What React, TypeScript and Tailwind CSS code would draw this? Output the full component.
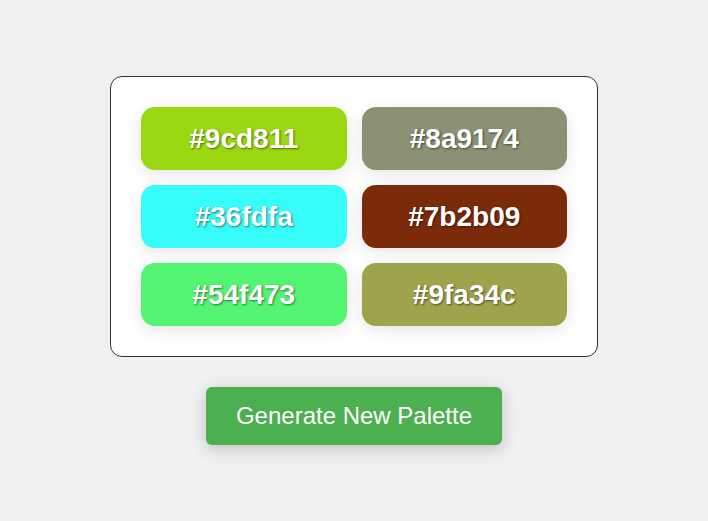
const colors = ["#9cd811", "#8a9174", "#36fdfa", "#7b2b09", "#54f473", "#9fa34c"];

const swatchBg: Record<string, string> = {
  "#9cd811": "bg-[#9cd811]",
  "#8a9174": "bg-[#8a9174]",
  "#36fdfa": "bg-[#36fdfa]",
  "#7b2b09": "bg-[#7b2b09]",
  "#54f473": "bg-[#54f473]",
  "#9fa34c": "bg-[#9fa34c]",
};

function Swatch({ hex }: { hex: string }) {
  return (
    <div
      className={`flex h-[63px] items-center justify-center rounded-[14px] text-[28px] font-bold text-white shadow-[0_4px_15px_rgba(0,0,0,0.1)] [text-shadow:1px_1px_2px_rgba(0,0,0,0.5)] ${swatchBg[hex]}`}
    >
      {hex}
    </div>
  );
}

export default function App() {
  return (
    <div className="flex min-h-screen flex-col items-center justify-center gap-[30px] bg-[#f0f0f0] font-['Liberation_Sans',Arial,sans-serif]">
      <div className="grid w-[488px] grid-cols-2 gap-[15px] rounded-[12px] border border-[#333] bg-white p-[30px]">
        {colors.map((c) => (
          <Swatch key={c} hex={c} />
        ))}
      </div>
      <button className="h-[58px] rounded-[6px] bg-[#4caf50] px-[30px] text-[24px] text-white shadow-[0_4px_15px_rgba(0,0,0,0.2)]">
        Generate New Palette
      </button>
    </div>
  );
}
